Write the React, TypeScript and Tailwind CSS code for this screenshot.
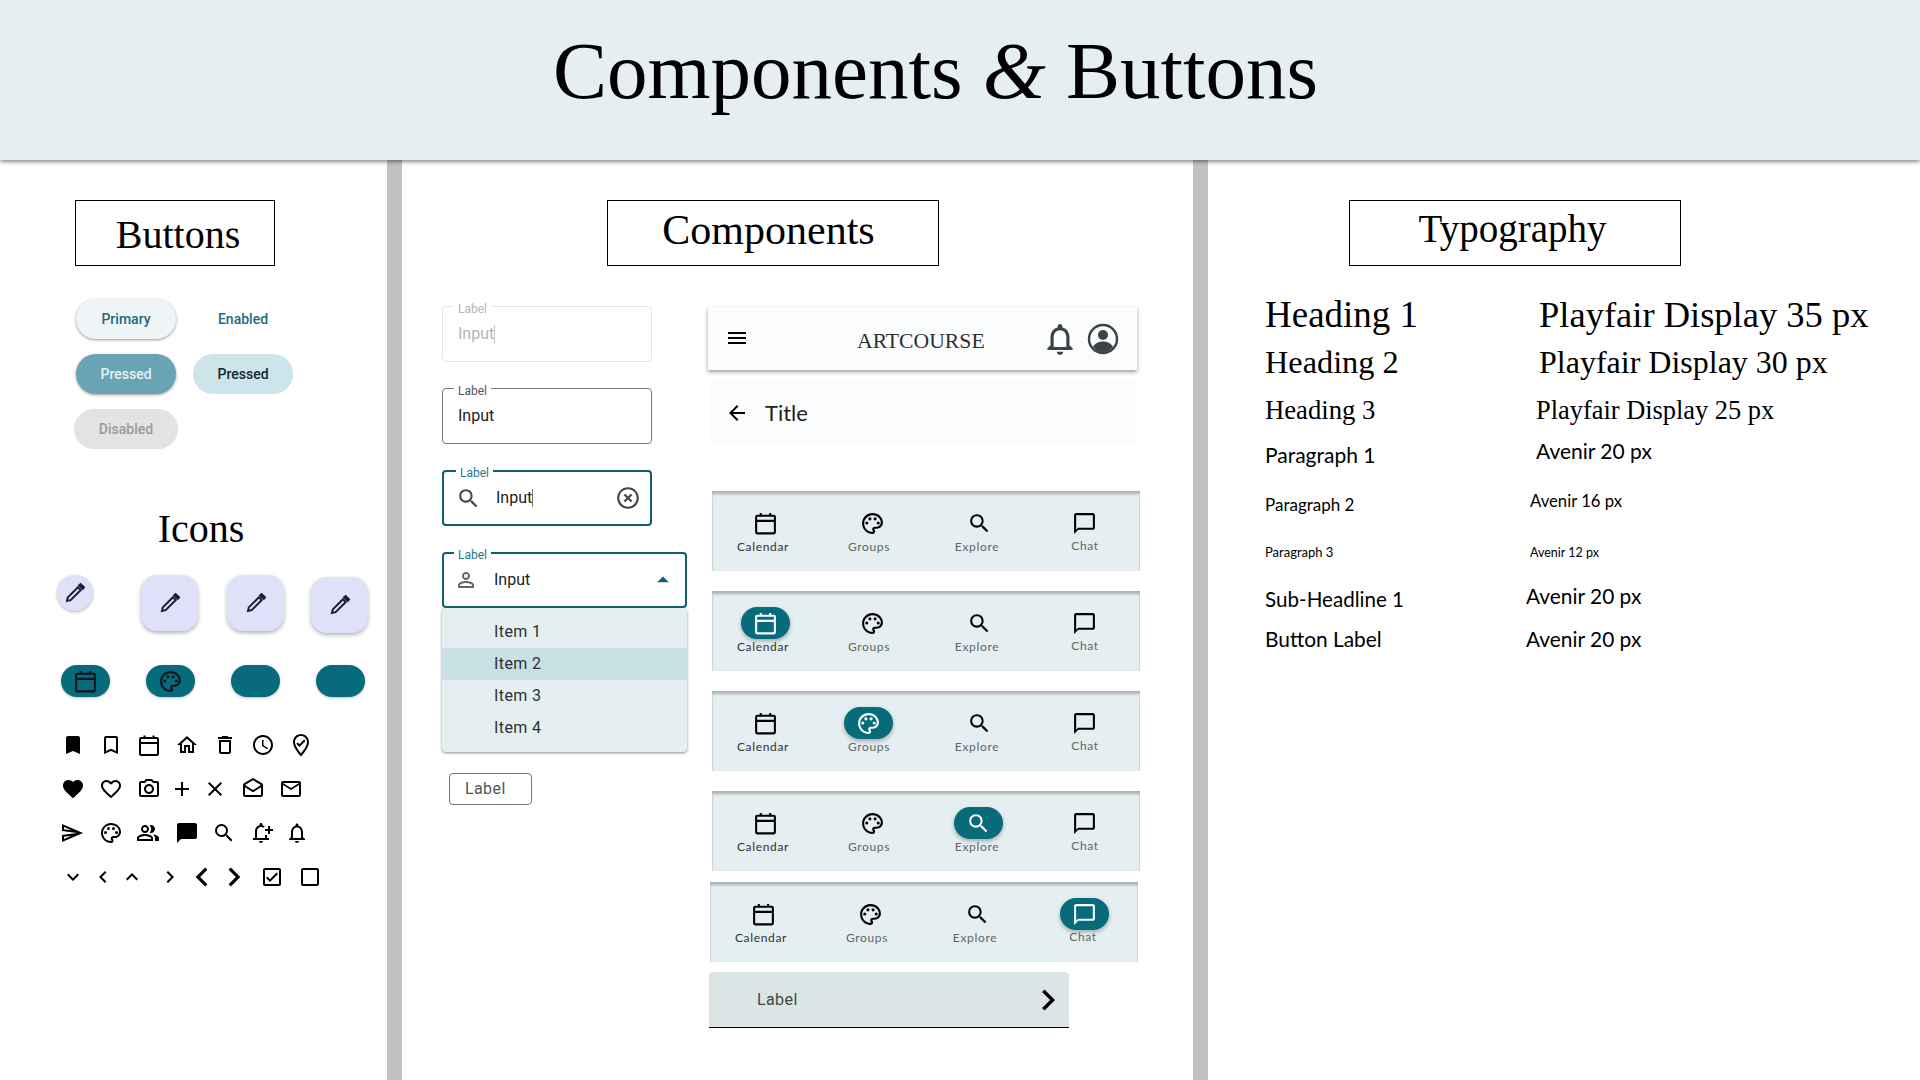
import React from 'react';
import {
  MdBookmark, MdBookmarkBorder, MdOutlineHome, MdDeleteOutline, MdAccessTime, MdOutlineWhereToVote,
  MdFavorite, MdFavoriteBorder, MdOutlinePhotoCamera, MdAdd, MdClose, MdOutlineDrafts, MdMailOutline,
  MdOutlineSend, MdOutlinePalette, MdOutlinePeopleAlt, MdChatBubble, MdSearch, MdOutlineNotificationAdd,
  MdNotificationsNone, MdKeyboardArrowDown, MdKeyboardArrowLeft, MdKeyboardArrowUp, MdKeyboardArrowRight,
  MdChevronLeft, MdChevronRight, MdOutlineCheckBox, MdCheckBoxOutlineBlank, MdMenu, MdArrowBack,
  MdHighlightOff, MdPersonOutline, MdArrowDropUp, MdChatBubbleOutline,
} from 'react-icons/md';

const serif = "font-['Liberation_Serif',serif]";

const CalendarIcon = ({ size = 25 }: { size?: number }) => (
  <svg width={size} height={size} viewBox="0 0 24 24" fill="none" stroke="currentColor" strokeWidth="2">
    <rect x="3" y="4.5" width="18" height="17" rx="1" />
    <path d="M3 9.5h18M7.5 2v3M16.500 2v3" />
  </svg>
);

const PencilIcon = () => (
  <svg width="24" height="24" viewBox="0 0 24 24" fill="none" stroke="#1c1b3a" strokeWidth="2">
    <path d="M4 20l.8-3.600L15 6.200l2.800 2.800L7.600 19.200z" />
    <path d="M16.200 4.200l1.400-1.200 3.400 3.400-1.200 1.400z" fill="#1c1b3a" />
  </svg>
);

const AccountIcon = () => (
  <svg width="32" height="32" viewBox="0 0 32 32">
    <circle cx="16" cy="16" r="14" fill="none" stroke="#3d4345" strokeWidth="2.4" />
    <circle cx="16" cy="12" r="5" fill="#3d4345" />
    <path d="M6 24c2-4 6-5.500 10-5.500s8 1.500 10 5.500c-2.500 3-6 5-10 5s-7.500-2-10-5z" fill="#3d4345" />
  </svg>
);

const Cell = ({ className = '', children }: { className?: string; children: React.ReactNode }) => (
  <div className={`w-6 h-6 flex items-center justify-center shrink-0 text-black ${className}`}>{children}</div>
);

const navItems = [
  { label: 'Calendar', icon: <CalendarIcon />, labelClass: 'mr-[5px] text-[#2f3436]', itemClass: '', activeClass: '' },
  { label: 'Groups', icon: <MdOutlinePalette size={25} />, labelClass: 'mr-[7px] text-[#5f6668]', itemClass: '', activeClass: 'mr-[8px]' },
  { label: 'Explore', icon: <MdSearch size={25} />, labelClass: 'mr-[5px] text-[#5f6668]', itemClass: '', activeClass: 'mr-[2px]' },
  { label: 'Chat', icon: <MdChatBubbleOutline size={25} />, labelClass: 'ml-[2px] -mt-[1px] text-[#5f6668]', itemClass: 'mr-[5px]', activeClass: 'ml-[5px]' },
];

const BottomNav = ({ active, className = '' }: { active?: number; className?: string }) => (
  <div className={`w-[428px] h-[80px] shrink-0 bg-[#e5eef0] grid grid-cols-4 shadow-[inset_0_4px_3px_-1px_#a9b1b3,inset_1px_0_1px_#d5dcde,inset_-1px_0_1px_#d5dcde] ${className}`}>
    {navItems.map((item, i) => (
      <div key={item.label} className={`flex flex-col items-center pt-[16px] ${item.itemClass}`}>
        <div className={`w-[49px] h-[32px] rounded-full flex items-center justify-center ${active === i ? `bg-[#076b7c] text-white shadow-[0_2px_4px_rgba(0,0,0,0.3)] ${item.activeClass}` : 'text-black'}`}>
          {item.icon}
        </div>
        <span className={`font-['Lato',sans-serif] text-[12px] leading-[16px] tracking-[0.65px] ${item.labelClass}`}>{item.label}</span>
      </div>
    ))}
  </div>
);

const Caret = ({ className = '' }: { className?: string }) => <span className={`inline-block w-px h-[18px] ${className}`} />;

const TypeRow = ({ h, left, right }: { h: string; left: React.ReactNode; right: React.ReactNode }) => (
  <div className={`flex items-center text-black ${h}`}>
    <div className="w-[274px] shrink-0">{left}</div>
    {right}
  </div>
);

export default function App() {
  return (
    <div className="w-[1920px] h-[1080px] overflow-hidden bg-white flex flex-col font-['Roboto',sans-serif]">
      <header className="relative z-10 h-[160px] shrink-0 bg-[#e5eff1] shadow-[0_2px_4px_rgba(0,0,0,0.45)] flex items-center justify-center">
        <h1 className={`${serif} text-[81px] leading-none text-black mr-[49px] mb-[18px]`}>
          Components <span className="italic">&amp;</span> Buttons
        </h1>
      </header>

      <main className="flex flex-1 min-h-0">
        {/* Buttons + icons */}
        <section className="w-[402px] shrink-0 border-r-[15px] border-[#c2c2c2] pl-[56px] pt-[40px]">
          <div className={`${serif} ml-[19px] w-[200px] h-[66px] border border-black flex items-center justify-center text-[40px] leading-none text-black`}>
            <span className="ml-[6px] mt-[3px]">Buttons</span>
          </div>

          <div className="ml-[20px] mt-[33px] grid grid-cols-[100px_100px] auto-rows-[40px] gap-x-[17px] gap-y-[15px] text-[14px] font-medium">
            <div className="rounded-full bg-[#eef5f7] shadow-[0_1px_3px_rgba(0,0,0,0.4)] flex items-center justify-center text-[#1d6a7a]">Primary</div>
            <div className="flex items-center justify-center text-[#1d6a7a]">Enabled</div>
            <div className="rounded-full bg-[#68a4b4] shadow-[0_1px_3px_rgba(0,0,0,0.4)] flex items-center justify-center text-[#e6f2f5]">Pressed</div>
            <div className="rounded-full bg-[#cce5eb] flex items-center justify-center text-[#10282f]">Pressed</div>
            <div className="-ml-[2px] w-[104px] rounded-full bg-[#e3e3e3] flex items-center justify-center text-[#9a9a9a]">Disabled</div>
          </div>

          <h2 className={`${serif} mt-[55px] w-[290px] h-[50px] text-center text-[40px] leading-[50px] text-black`}>Icons</h2>

          <div className="mt-[21px] h-[58px] flex items-start">
            <div className="ml-[1px] w-[36px] h-[36px] rounded-full bg-[#dfe1f8] shadow-[0_1px_3px_rgba(0,0,0,0.3)] flex items-center justify-center"><PencilIcon /></div>
            <div className="ml-[48px] w-[57px] h-[56px] rounded-[16px] bg-[#dfe1f8] shadow-[0_2px_4px_rgba(0,0,0,0.3)] flex items-center justify-center"><PencilIcon /></div>
            <div className="ml-[29px] w-[57px] h-[56px] rounded-[16px] bg-[#dfe1f8] shadow-[0_2px_4px_rgba(0,0,0,0.3)] flex items-center justify-center"><PencilIcon /></div>
            <div className="ml-[27px] mt-[2px] w-[57px] h-[56px] rounded-[16px] bg-[#dfe1f8] shadow-[0_2px_4px_rgba(0,0,0,0.3)] flex items-center justify-center"><PencilIcon /></div>
          </div>

          <div className="mt-[32px] ml-[5px] flex gap-[36px] text-[#10151a]">
            <div className="w-[49px] h-[32px] rounded-full bg-[#076b7c] shadow-[0_1px_3px_rgba(0,0,0,0.25)] flex items-center justify-center"><CalendarIcon /></div>
            <div className="w-[49px] h-[32px] rounded-full bg-[#076b7c] shadow-[0_1px_3px_rgba(0,0,0,0.25)] flex items-center justify-center"><MdOutlinePalette size={25} /></div>
            <div className="w-[49px] h-[32px] rounded-full bg-[#076b7c] shadow-[0_1px_3px_rgba(0,0,0,0.25)]" />
            <div className="w-[49px] h-[32px] rounded-full bg-[#076b7c] shadow-[0_1px_3px_rgba(0,0,0,0.25)]" />
          </div>

          <div className="mt-[36px] ml-[5px] flex flex-col gap-[20px]">
            <div className="flex gap-[14px]">
              <Cell><MdBookmark size={24} /></Cell>
              <Cell><MdBookmarkBorder size={24} /></Cell>
              <Cell><CalendarIcon /></Cell>
              <Cell><MdOutlineHome size={24} /></Cell>
              <Cell><MdDeleteOutline size={24} /></Cell>
              <Cell><MdAccessTime size={24} /></Cell>
              <Cell><MdOutlineWhereToVote size={24} /></Cell>
            </div>
            <div className="flex">
              <Cell><MdFavorite size={24} /></Cell>
              <Cell className="ml-[14px]"><MdFavoriteBorder size={24} /></Cell>
              <Cell className="ml-[14px]"><MdOutlinePhotoCamera size={24} /></Cell>
              <Cell className="ml-[9px]"><MdAdd size={24} /></Cell>
              <Cell className="ml-[9px]"><MdClose size={24} /></Cell>
              <Cell className="ml-[14px]"><MdOutlineDrafts size={24} /></Cell>
              <Cell className="ml-[14px]"><MdMailOutline size={24} /></Cell>
            </div>
            <div className="flex">
              <Cell className="-ml-[1px]"><MdOutlineSend size={24} /></Cell>
              <Cell className="ml-[15px]"><MdOutlinePalette size={24} /></Cell>
              <Cell className="ml-[13px]"><MdOutlinePeopleAlt size={24} /></Cell>
              <Cell className="ml-[15px]"><MdChatBubble size={24} /></Cell>
              <Cell className="ml-[13px]"><MdSearch size={24} /></Cell>
              <Cell className="ml-[13px]"><MdOutlineNotificationAdd size={24} /></Cell>
              <Cell className="ml-[12px]"><MdNotificationsNone size={24} /></Cell>
            </div>
            <div className="flex">
              <Cell><MdKeyboardArrowDown size={24} /></Cell>
              <Cell className="ml-[6px]"><MdKeyboardArrowLeft size={24} /></Cell>
              <Cell className="ml-[5px]"><MdKeyboardArrowUp size={24} /></Cell>
              <Cell className="ml-[14px]"><MdKeyboardArrowRight size={24} /></Cell>
              <Cell className="ml-[8px]"><MdChevronLeft size={38} className="shrink-0" /></Cell>
              <Cell className="ml-[8px]"><MdChevronRight size={38} className="shrink-0" /></Cell>
              <Cell className="ml-[14px]"><MdOutlineCheckBox size={24} /></Cell>
              <Cell className="ml-[14px]"><MdCheckBoxOutlineBlank size={24} /></Cell>
            </div>
          </div>
        </section>

        {/* Components */}
        <section className="w-[806px] shrink-0 border-r-[15px] border-[#c2c2c2] pt-[40px]">
          <div className={`${serif} ml-[205px] w-[332px] h-[66px] border border-black flex items-center justify-center text-[42px] leading-none text-black`}>
            <span className="mr-[9px] -mt-[6px]">Components</span>
          </div>

          <div className="mt-[40px] flex">
            <div className="w-[306px] shrink-0 pl-[40px] text-[16px]">
              <div className="relative w-[210px] h-[56px] rounded border border-[#e6e6e6] flex items-center px-[15px] text-[#b5b5b5]">
                <span className="absolute -top-[4px] left-[11px] bg-white px-[4px] text-[12px] leading-[12px] text-[#b5b5b5]">Label</span>
                Input<Caret className="bg-[#c5c5c5]" />
              </div>
              <div className="relative mt-[26px] w-[210px] h-[56px] rounded border border-[#777] flex items-center px-[15px] text-[#222]">
                <span className="absolute -top-[4px] left-[11px] bg-white px-[4px] text-[12px] leading-[12px] text-[#555]">Label</span>
                Input
              </div>
              <div className="relative mt-[26px] w-[210px] h-[56px] rounded border-2 border-[#0f5f70] flex items-center pl-[37px] text-[#222]">
                <span className="absolute -top-[5px] left-[12px] bg-white px-[4px] text-[12px] leading-[12px] text-[#2a7686]">Label</span>
                <MdSearch size={25} className="absolute left-[12px] top-[14px] text-[#444]" />
                <span className="ml-[15px]">Input</span><Caret className="bg-[#777]" />
                <MdHighlightOff size={26} className="absolute right-[9px] top-[13px] text-[#444]" />
              </div>
              <div className="relative mt-[26px] w-[245px] h-[56px] rounded border-2 border-[#0f5f70] flex items-center pl-[50px] text-[#222]">
                <span className="absolute -top-[5px] left-[10px] bg-white px-[4px] text-[12px] leading-[12px] text-[#2a7686]">Label</span>
                <MdPersonOutline size={24} className="absolute left-[10px] top-[14px] text-[#666]" />
                Input
                <MdArrowDropUp size={28} className="absolute right-[8px] top-[12px] text-[#0f5f70]" />
              </div>
              <div className="w-[245px] h-[144px] rounded bg-[#e5eff1] py-[8px] shadow-[0_1px_3px_rgba(0,0,0,0.45)] text-[#2b3133] tracking-[0.4px]">
                <div className="h-[32px] pl-[52px] flex items-center">Item 1</div>
                <div className="h-[32px] pl-[52px] flex items-center bg-[#c8dfe4]">Item 2</div>
                <div className="h-[32px] pl-[52px] flex items-center">Item 3</div>
                <div className="h-[32px] pl-[52px] flex items-center">Item 4</div>
              </div>
              <div className="mt-[21px] ml-[7px] w-[83px] h-[32px] rounded border border-[#777] flex items-center pl-[15px] text-[#555] tracking-[0.4px]">Label</div>
            </div>

            <div className="mt-[1px] flex flex-col">
              <div className="w-[429px] h-[63px] bg-[#fafcfd] shadow-[0_2px_4px_rgba(0,0,0,0.4)] flex items-center pl-[17px] relative z-[1]">
                <MdMenu size={24} className="mb-[1px] text-black" />
                <span className={`${serif} ml-[108px] mt-[6px] w-[128px] text-[21.7px] leading-none text-[#2b2f31] whitespace-nowrap`}>ARTCOURSE</span>
                <MdNotificationsNone size={38} className="ml-[56px] text-[#3d4345]" />
                <div className="ml-[8px]"><AccountIcon /></div>
              </div>
              <div className="mt-[10px] ml-[2px] w-[427px] h-[65px] bg-[#fbfcfe] flex items-center pl-[15px] font-['Lato',sans-serif]">
                <MdArrowBack size={24} className="text-black" />
                <span className="ml-[16px] text-[22px] text-[#222]">Title</span>
              </div>
              <BottomNav className="mt-[46px] ml-[4px]" />
              <BottomNav active={0} className="mt-[20px] ml-[4px]" />
              <BottomNav active={1} className="mt-[20px] ml-[4px]" />
              <BottomNav active={2} className="mt-[20px] ml-[4px]" />
              <BottomNav active={3} className="mt-[11px] ml-[2px]" />
              <div className="mt-[10px] ml-[1px] w-[360px] h-[56px] shrink-0 rounded-t bg-[#dce5e6] border-b border-black flex items-center justify-between pl-[48px] text-[16px] text-[#444] tracking-[0.4px]">
                Label
                <MdChevronRight size={42} className="text-black" />
              </div>
            </div>
          </div>
        </section>

        {/* Typography */}
        <section className="flex-1 min-w-0 pt-[40px] pl-[57px] whitespace-nowrap">
          <div className={`${serif} ml-[84px] w-[332px] h-[66px] border border-black flex items-center justify-center text-[39px] leading-none text-black`}>
            <span className="mr-[5px] -mt-[9px]">Typography</span>
          </div>
          <div className="mt-[25px]">
            <TypeRow
              h="h-[48px]"
              left={<span className={`${serif} text-[37px]`}>Heading 1</span>}
              right={<span className={`${serif} text-[36.5px]`}>Playfair Display 35 px</span>}
            />
            <TypeRow
              h="h-[48px]"
              left={<span className={`${serif} mb-[2px] text-[32.3px] block`}>Heading 2</span>}
              right={<span className={`${serif} mb-[2px] text-[32px]`}>Playfair Display 30 px</span>}
            />
            <TypeRow
              h="h-[47px]"
              left={<span className={`${serif} text-[26.7px]`}>Heading 3</span>}
              right={<span className={`${serif} -ml-[3px] text-[26.4px]`}>Playfair Display 25 px</span>}
            />
            <div className="font-['Lato',sans-serif]">
              <TypeRow
                h="h-[47px]"
                left={<span className="block mb-[5px] text-[21px]">Paragraph 1</span>}
                right={<span className="-ml-[3px] mb-[13px] text-[21px]">Avenir 20 px</span>}
              />
              <TypeRow
                h="h-[48px]"
                left={<span className="block text-[17px]">Paragraph 2</span>}
                right={<span className="-ml-[9px] mb-[6px] text-[16.7px]">Avenir 16 px</span>}
              />
              <TypeRow
                h="h-[48px]"
                left={<span className="block mb-[1px] text-[13px]">Paragraph 3</span>}
                right={<span className="-ml-[9px] text-[12.5px]">Avenir 12 px</span>}
              />
              <TypeRow
                h="h-[46px]"
                left={<span className="block mb-[2px] text-[20.6px]">Sub-Headline 1</span>}
                right={<span className="-ml-[13px] mb-[8px] text-[20.9px]">Avenir 20 px</span>}
              />
              <TypeRow
                h="h-[34px]"
                left={<span className="block mb-[2px] text-[20.9px]">Button Label</span>}
                right={<span className="-ml-[13px] mb-[2px] text-[20.9px]">Avenir 20 px</span>}
              />
            </div>
          </div>
        </section>
      </main>
    </div>
  );
}
